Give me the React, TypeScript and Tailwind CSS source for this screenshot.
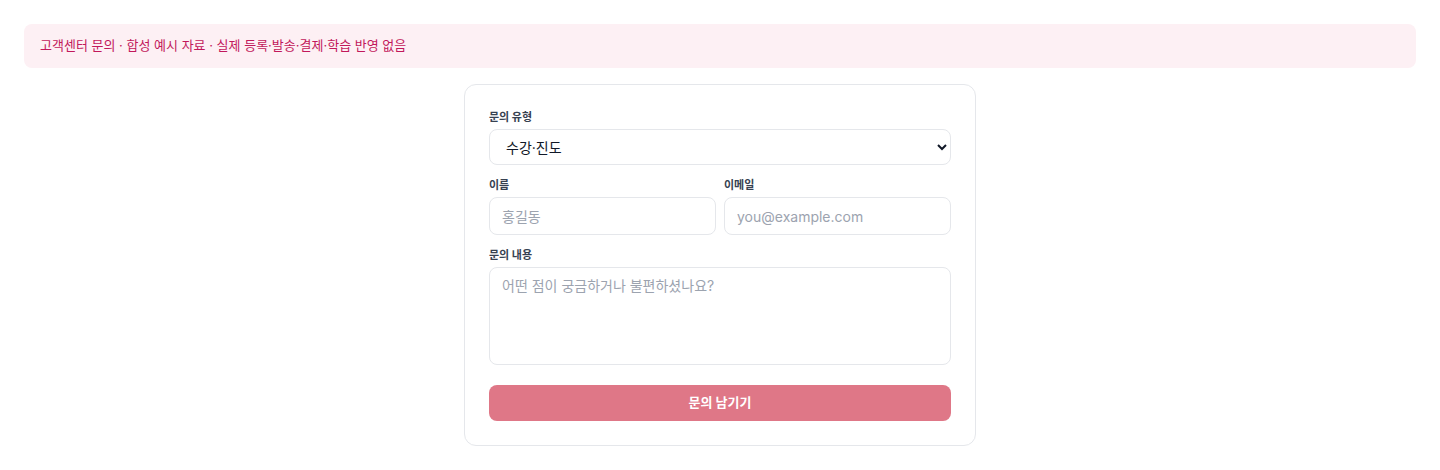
import React from "react";

export default function App() {
  const font = { fontFamily: 'Inter, "Noto Sans CJK KR", "Noto Sans", sans-serif' };
  return (
    <div className="min-h-[470px] bg-white p-6" style={font}>
      <div className="flex h-11 items-center rounded-lg bg-[#fdf0f4] px-4 text-[13px] text-[#c2185b]">
        고객센터 문의 · 합성 예시 자료 · 실제 등록·발송·결제·학습 반영 없음
      </div>
      <div className="mt-4 flex justify-center">
        <form className="w-[512px] rounded-xl border border-[#e5e7eb] bg-white p-6" onSubmit={(e) => e.preventDefault()}>
          <label className="mb-1 block text-[11px] font-bold leading-4 text-[#374151]">문의 유형</label>
          <select className="h-9 w-full rounded-lg border border-[#e5e7eb] bg-white px-3 text-sm text-[#111827]">
            <option>수강·진도</option>
            <option>결제·환불</option>
            <option>기타</option>
          </select>
          <div className="mt-3 grid grid-cols-2 gap-2">
            <div>
              <label className="mb-1 block text-[11px] font-bold leading-4 text-[#374151]">이름</label>
              <input className="h-[38px] w-full rounded-lg border border-[#e5e7eb] px-3 text-sm placeholder:text-[#9ca3af]" placeholder="홍길동" />
            </div>
            <div>
              <label className="mb-1 block text-[11px] font-bold leading-4 text-[#374151]">이메일</label>
              <input className="h-[38px] w-full rounded-lg border border-[#e5e7eb] px-3 text-sm placeholder:text-[#9ca3af]" placeholder="you@example.com" />
            </div>
          </div>
          <label className="mb-1 mt-3 block text-[11px] font-bold leading-4 text-[#374151]">문의 내용</label>
          <textarea className="block h-[98px] w-full resize-none rounded-lg border border-[#e5e7eb] px-3 py-2 text-sm placeholder:text-[#9ca3af]" placeholder="어떤 점이 궁금하거나 불편하셨나요?" />
          <button type="submit" className="mt-5 h-9 w-full rounded-lg bg-[#df7787] text-[13px] font-bold text-white">
            문의 남기기
          </button>
        </form>
      </div>
    </div>
  );
}
